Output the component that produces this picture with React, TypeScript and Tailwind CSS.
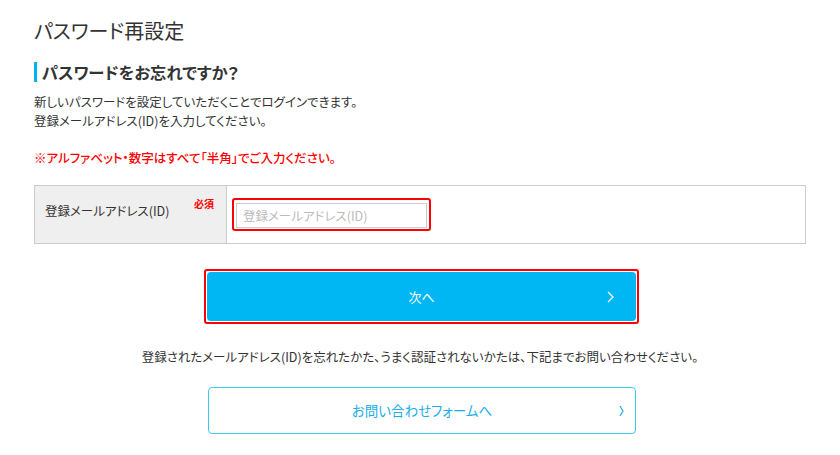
import React from 'react';

function Chevron({ className, w = 7 }: { className?: string; w?: number }) {
  return (
    <svg className={className} width={w} height="12" viewBox={`0 0 ${w} 12`} fill="none">
      <path d={`M1 1l${w - 2} 5-${w - 2} 5`} stroke="currentColor" strokeWidth="1.2" />
    </svg>
  );
}

export default function App() {
  return (
    <div
      className="w-[840px] h-[455px] bg-white px-[34px] pt-[21px] text-[#333] overflow-hidden [font-feature-settings:'palt']"
      style={{ fontFamily: '"Noto Sans CJK JP", "Noto Sans", sans-serif' }}
    >
      <h1 className="text-[20px] leading-[20px] font-normal">パスワード再設定</h1>

      <h2 className="mt-[21px] border-l-[3px] border-[#00b4f0] pl-[5px] text-[16.3px] leading-[20px] font-bold">
        パスワードをお忘れですか？
      </h2>

      <p className="mt-[10px] text-[12.5px] leading-[19px]">
        新しいパスワードを設定していただくことでログインできます。
        <br />
        登録メールアドレス(ID)を入力してください。
      </p>

      <p className="mt-[18px] text-[12.5px] leading-[19px] text-[#ff0000] font-medium">
        ※アルファベット・数字はすべて「半角」でご入力ください。
      </p>

      {/* form table */}
      <div className="mt-[18px] flex h-[59px] border border-[#cccccc]">
        <div className="w-[192px] shrink-0 bg-[#efefef] border-r border-[#cccccc] flex justify-between pl-[10px] pr-[12px] pt-[15px]">
          <span className="text-[12.5px] leading-[19px]">登録メールアドレス(ID)</span>
          <span className="-mt-[4px] text-[10px] leading-[14px] font-bold text-[#ff0000]">必須</span>
        </div>
        <div className="flex items-center pl-[5px]">
          <div className="w-[199px] h-[33px] border-2 border-[#ff0000] rounded-[3px] p-[2px]">
            <input
              type="text"
              placeholder="登録メールアドレス(ID)"
              className="w-full h-full border border-[#cccccc] px-[6px] text-[12.5px] outline-none placeholder:text-[#bbbbbb]"
            />
          </div>
        </div>
      </div>

      {/* next */}
      <div className="mt-[25px] ml-[170px] w-[435px] border-2 border-[#ff0000] rounded-[3px] p-[1px]">
        <button className="relative w-full h-[49px] rounded-[4px] bg-[#00b6f3] text-white text-[13px] flex items-center justify-center">
          次へ
          <Chevron className="absolute right-[22px] top-[19px]" />
        </button>
      </div>

      <p className="mt-[23px] text-center text-[12.5px] leading-[19px]">
        登録されたメールアドレス(ID)を忘れたかた、うまく認証されないかたは、下記までお問い合わせください。
      </p>

      <div className="mt-[21px] ml-[174px] w-[428px]">
        <button className="relative w-full h-[47px] rounded-[4px] border border-[#3ccbf4] text-[#1aaee8] text-[13.5px] flex items-center justify-center">
          お問い合わせフォームへ
          <Chevron w={5} className="absolute right-[11px] top-[17px]" />
        </button>
      </div>
    </div>
  );
}
